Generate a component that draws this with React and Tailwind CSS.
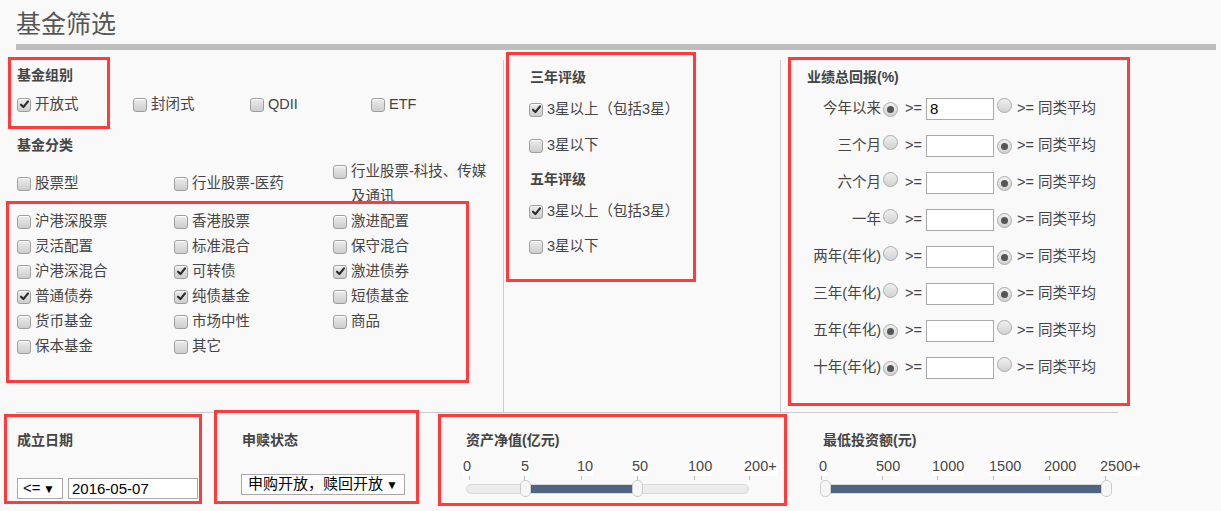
import React from "react";

const FONT = "font-['Liberation_Sans','Noto_Sans_CJK_SC',sans-serif]";

function Cb({ checked }) {
  return (
    <span className="inline-flex w-[14px] h-[14px] shrink-0 items-center justify-center rounded-[3px] border border-[#9e9e9e] bg-linear-to-b from-[#ececec] to-[#cdcdcd] shadow-[inset_0_1px_0_#fff]">
      {checked && (
        <svg viewBox="0 0 12 12" className="w-[11px] h-[11px]">
          <path d="M2.2 6.3 L4.8 8.8 L9.8 2.6" fill="none" stroke="#2a2a2a" strokeWidth="2.4" strokeLinecap="round" strokeLinejoin="round" />
        </svg>
      )}
    </span>
  );
}

function Radio({ checked }) {
  return (
    <span className="inline-flex w-[15px] h-[15px] shrink-0 items-center justify-center rounded-full border border-[#ababab] bg-linear-to-b from-[#f0f0f0] to-[#d2d2d2]">
      {checked && <span className="w-[7px] h-[7px] rounded-full bg-[#555]" />}
    </span>
  );
}

function Check({ checked, children, className = "" }) {
  return (
    <div className={`flex items-center gap-[4px] h-[25px] ${className}`}>
      <Cb checked={checked} />
      <span>{children}</span>
    </div>
  );
}

function Header({ children, className = "" }) {
  return <div className={`h-[20px] leading-[20px] text-[14px] font-bold text-[#444] ${className}`}>{children}</div>;
}

function Slider({ width, ticks, labels, h1, h2 }) {
  return (
    <div className="relative h-[45px]" style={{ width }}>
      {labels.map(([t, x]) => (
        <span
          key={t}
          className="absolute top-[2px] h-[19px] leading-[19px] bg-white text-[14.5px] text-[#444]"
          style={{ left: x }}
        >
          {t}
        </span>
      ))}
      {ticks.map((x) => (
        <span key={x} className="absolute top-[21px] h-[4px] w-px bg-[#bbb]" style={{ left: x }} />
      ))}
      <div className="absolute top-[29px] left-0 right-0 h-[10px] rounded-full border border-[#dadada] bg-[#ececec]" />
      <div className="absolute top-[30px] h-[8px] bg-[#4e6482]" style={{ left: h1 + 9, width: h2 - h1 - 8 }} />
      <div className="absolute top-[25px] w-[11px] h-[17px] rounded-[5px] border border-[#cdcdcd] bg-[#f6f6f6]" style={{ left: h1 }} />
      <div className="absolute top-[25px] w-[11px] h-[17px] rounded-[5px] border border-[#cdcdcd] bg-[#f6f6f6]" style={{ left: h2 }} />
    </div>
  );
}

const categories = [
  [["沪港深股票", false], ["香港股票", false], ["激进配置", false]],
  [["灵活配置", false], ["标准混合", false], ["保守混合", false]],
  [["沪港深混合", false], ["可转债", true], ["激进债券", true]],
  [["普通债券", true], ["纯债基金", true], ["短债基金", false]],
  [["货币基金", false], ["市场中性", false], ["商品", false]],
  [["保本基金", false], ["其它", false]],
];

const perf = [
  ["今年以来", true, "8"],
  ["三个月", false, ""],
  ["六个月", false, ""],
  ["一年", false, ""],
  ["两年(年化)", false, ""],
  ["三年(年化)", false, ""],
  ["五年(年化)", true, ""],
  ["十年(年化)", true, ""],
];

const redBoxes = [
  [8, 57, 102, 72],
  [6, 201, 463, 182],
  [506, 52, 190, 230],
  [788, 57, 342, 349],
  [4, 414, 198, 90],
  [214, 410, 205, 94],
  [438, 414, 349, 92],
];

export default function App() {
  return (
    <div className={`relative w-[1221px] h-[511px] overflow-hidden bg-[#f9f9f9] text-[14.5px] text-[#444] ${FONT}`}>
      <div className="pl-[16px] pr-[5px]">
        {/* Title */}
        <div className="h-[44px] pt-[9px]">
          <div className="text-[25px] leading-[30px] text-[#555]">基金筛选</div>
        </div>
        <div className="h-[6px] bg-[#bdbdbd]" />

        {/* Top section */}
        <div className="mt-[10px] flex w-[1102px] h-[353px] border-b border-[#cccccc]">
          {/* Column 1 */}
          <div className="w-[487px] pl-[1px]">
            <Header className="mt-[5px]">基金组别</Header>
            <div className="mt-[7px] flex">
              <Check checked className="w-[116px]">开放式</Check>
              <Check className="w-[117px]">封闭式</Check>
              <Check className="w-[121px]">QDII</Check>
              <Check>ETF</Check>
            </div>
            <Header className="mt-[18px]">基金分类</Header>
            <div className="mt-[4px] grid grid-cols-[157px_159px_1fr] items-center">
              <Check>股票型</Check>
              <Check>行业股票-医药</Check>
              <div className="flex items-start gap-[4px]">
                <span className="mt-[5px]"><Cb /></span>
                <span className="w-[142px] leading-[25px]">行业股票-科技、传媒及通讯</span>
              </div>
              {categories.map((row, i) =>
                [0, 1, 2].map((j) =>
                  row[j] ? (
                    <Check key={`${i}-${j}`} checked={row[j][1]}>{row[j][0]}</Check>
                  ) : (
                    <div key={`${i}-${j}`} />
                  )
                )
              )}
            </div>
          </div>

          {/* Column 2 */}
          <div className="w-[277px] border-l border-[#cccccc] pl-[25px] pt-[7px]">
            <Header className="pl-[1px]">三年评级</Header>
            <Check checked className="mt-[10px]">3星以上（包括3星）</Check>
            <Check className="mt-[11px]">3星以下</Check>
            <Header className="mt-[11px] pl-[1px]">五年评级</Header>
            <Check checked className="mt-[10px]">3星以上（包括3星）</Check>
            <Check className="mt-[10px]">3星以下</Check>
          </div>

          {/* Column 3 */}
          <div className="flex-1 border-l border-[#cccccc] pl-[26px] pt-[7px]">
            <Header>业绩总回报(%)</Header>
            <div className="mt-[3px]">
              {perf.map(([label, first, val]) => (
                <div key={label} className="flex h-[37px] items-center">
                  <span className="w-[74px] text-right whitespace-nowrap">{label}</span>
                  <span className="ml-[2px]"><Radio checked={first} /></span>
                  <span className="ml-[7px]">&gt;=</span>
                  <div className="ml-[4px] w-[68px] h-[22px] border border-[#a9a9a9] bg-white pl-[3px] leading-[20px] text-[15px] text-black">
                    {val}
                  </div>
                  <span className="ml-[3px]"><Radio checked={!first} /></span>
                  <span className="ml-[5px] whitespace-nowrap">&gt;= 同类平均</span>
                </div>
              ))}
            </div>
          </div>
        </div>

        {/* Bottom section */}
        <div className="flex pt-[17px]">
          <div className="w-[225px] pl-[1px]">
            <Header>成立日期</Header>
            <div className="mt-[28px] flex gap-[5px]">
              <div className="flex w-[46px] h-[21px] items-center justify-between border border-[#a9a9a9] bg-white pl-[5px] pr-[7px] text-[15px] text-black">
                <span>&lt;=</span>
                <span className="text-[12px]">▼</span>
              </div>
              <div className="w-[130px] h-[21px] border border-[#a9a9a9] bg-white pl-[3px] leading-[19px] text-[15px] text-black">
                2016-05-07
              </div>
            </div>
          </div>
          <div className="w-[225px]">
            <Header className="pl-[1px]">申赎状态</Header>
            <div className="mt-[24px] flex w-[164px] h-[21px] items-center justify-between border border-[#a9a9a9] bg-white pl-[6px] pr-[6px] text-[15px] text-black">
              <span>申购开放，赎回开放</span>
              <span className="text-[12px]">▼</span>
            </div>
          </div>
          <div className="w-[354px]">
            <Header>资产净值(亿元)</Header>
            <div className="mt-[5px]">
              <Slider
                width={283}
                ticks={[3, 58, 115, 171, 228, 283]}
                labels={[["0", -3], ["5", 55], ["10", 111], ["50", 166], ["100", 222], ["200+", 278]]}
                h1={54}
                h2={166}
              />
            </div>
          </div>
          <div className="flex-1">
            <Header className="pl-[3px]">最低投资额(元)</Header>
            <div className="mt-[5px]">
              <Slider
                width={292}
                ticks={[1, 62, 117, 173, 229, 285]}
                labels={[["0", -1], ["500", 56], ["1000", 112], ["1500", 169], ["2000", 224], ["2500+", 280]]}
                h1={0}
                h2={281}
              />
            </div>
          </div>
        </div>
      </div>

      {/* Annotation boxes */}
      {redBoxes.map(([l, t, w, h], i) => (
        <div
          key={i}
          className="pointer-events-none absolute border-[3px] border-[#ff3b3b]"
          style={{ left: l, top: t, width: w, height: h }}
        />
      ))}
    </div>
  );
}
